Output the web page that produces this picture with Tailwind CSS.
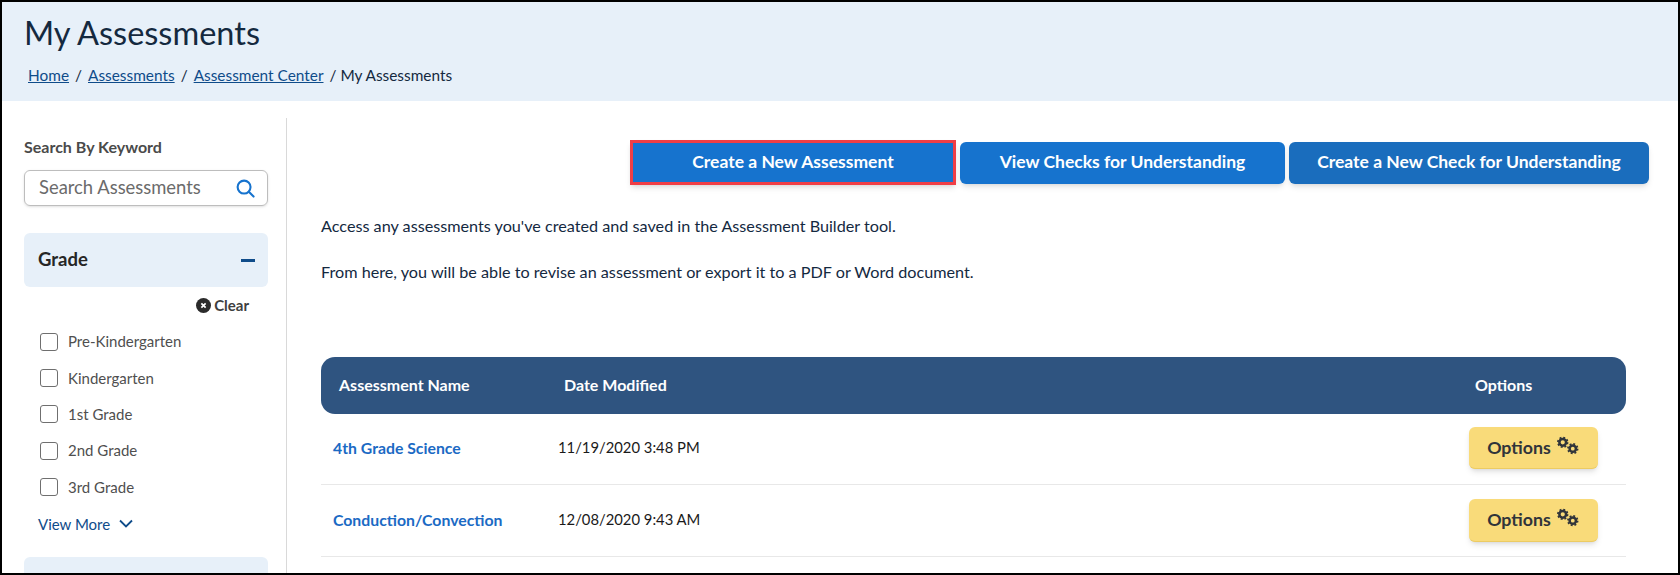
<!DOCTYPE html>
<html lang="en">
<head>
    <meta charset="UTF-8">
    <title>My Assessments</title>
    <script src="https://cdn.jsdelivr.net/npm/@tailwindcss/browser@4"></script>
</head>
<body class="bg-white font-['Lato','Liberation_Sans',sans-serif]">
<div class="h-[575px] overflow-hidden border-2 border-black">

    <!-- Page header -->
    <header class="h-[99px] bg-[#e7f0f9] pl-[22px]">
        <h1 class="pt-[13px] text-[32.5px] leading-[36px] text-[#14293f]">My Assessments</h1>
        <nav class="mt-[14px] ml-[4px] flex gap-[6px] text-[15.4px] leading-[20px] text-[#14293f]">
            <a href="#" class="text-[#0f4c8a] underline">Home</a><span>/</span>
            <a href="#" class="text-[#0f4c8a] underline">Assessments</a><span>/</span>
            <a href="#" class="text-[#0f4c8a] underline">Assessment Center</a>
            <span>/ My Assessments</span>
        </nav>
    </header>

    <div class="flex pt-[17px]">
        <!-- Filters -->
        <aside class="h-[460px] w-[285px] shrink-0 border-r border-[#d9d9d9] pt-[19px] pl-[22px] pr-[18px]">
            <p class="text-[16px] leading-[20px] font-bold text-[#4a4a4a]">Search By Keyword</p>
            <div class="mt-[13px] flex h-[36px] items-center justify-between rounded-md border border-[#bdbdbd] pl-[14px] pr-[12px] shadow-sm">
                <span class="text-[18.4px] text-[#6b6b6b]">Search Assessments</span>
                <svg class="h-[19px] w-[19px]" viewBox="0 0 20 20" fill="none" stroke="#1673ce" stroke-width="2.2" stroke-linecap="round"><circle cx="8.5" cy="8.5" r="6.8"/><path d="M13.5 13.5 L18.5 18.5"/></svg>
            </div>

            <div class="mt-[27px] flex h-[54px] items-center justify-between rounded-md bg-[#e7f0f9] pl-[14px] pr-[13px]">
                <span class="text-[18.5px] font-bold text-[#262626]">Grade</span>
                <span class="h-[3px] w-[14px] bg-[#0f4c8a]"></span>
            </div>

            <div class="mt-[8px] flex items-center justify-end gap-[3px] pr-[19px] text-[15px] leading-[20px] font-bold text-[#3f3f3f]">
                <svg class="h-[15px] w-[15px]" viewBox="0 0 16 16"><circle cx="8" cy="8" r="8" fill="#2b2b2b"/><path d="M5.7 5.7 L10.3 10.3 M10.3 5.7 L5.7 10.3" stroke="#fff" stroke-width="1.8"/></svg>
                Clear
            </div>

            <ul class="mt-[8px] pl-[16px] text-[15px] leading-[20px] text-[#4f4f4f]">
                <li class="flex h-[36.4px] items-center gap-[10px]"><span class="mt-[1px] h-[18px] w-[18px] rounded-[3px] border border-[#6f6f6f]"></span>Pre-Kindergarten</li>
                <li class="flex h-[36.4px] items-center gap-[10px]"><span class="mt-[1px] h-[18px] w-[18px] rounded-[3px] border border-[#6f6f6f]"></span>Kindergarten</li>
                <li class="flex h-[36.4px] items-center gap-[10px]"><span class="mt-[1px] h-[18px] w-[18px] rounded-[3px] border border-[#6f6f6f]"></span>1st Grade</li>
                <li class="flex h-[36.4px] items-center gap-[10px]"><span class="mt-[1px] h-[18px] w-[18px] rounded-[3px] border border-[#6f6f6f]"></span>2nd Grade</li>
                <li class="flex h-[36.4px] items-center gap-[10px]"><span class="mt-[1px] h-[18px] w-[18px] rounded-[3px] border border-[#6f6f6f]"></span>3rd Grade</li>
            </ul>

            <a href="#" class="mt-[9px] ml-[14px] flex items-center gap-[9px] text-[15px] leading-[20px] text-[#0f4c8a]">
                View More
                <svg class="h-[9px] w-[14px]" viewBox="0 0 14 9" fill="none" stroke="#0f4c8a" stroke-width="1.8"><path d="M1 1.5 L7 7.5 L13 1.5"/></svg>
            </a>

            <div class="mt-[23px] h-[54px] rounded-md bg-[#e7f0f9]"></div>
        </aside>

        <!-- Main content -->
        <main class="w-[1391px] pl-[34px] pr-[29px]">
            <div class="flex items-center justify-end gap-[4px] pt-[22px] text-[17.5px] font-bold text-white">
                <a href="#" class="flex h-[45px] w-[326px] items-center justify-center border-[3px] border-[#ef3e46] bg-[#1673ce] shadow-md">Create a New Assessment</a>
                <a href="#" class="flex h-[42px] w-[325px] items-center justify-center rounded-md bg-[#1673ce] shadow-md">View Checks for Understanding</a>
                <a href="#" class="flex h-[42px] w-[360px] items-center justify-center rounded-md bg-[#1a6dbd] shadow-md">Create a New Check for Understanding</a>
            </div>

            <p class="mt-[30px] text-[16.2px] leading-[22px] text-[#14293f]">Access any assessments you've created and saved in the Assessment Builder tool.</p>
            <p class="mt-[24px] text-[16.2px] leading-[22px] text-[#14293f]">From here, you will be able to revise an assessment or export it to a PDF or Word document.</p>

            <div class="mt-[74px] w-[1305px]">
                <div class="flex h-[57px] items-center rounded-[14px] bg-[#2f5480] pb-[2px] pl-[18px] text-[16px] font-bold text-white">
                    <span class="w-[225px]">Assessment Name</span>
                    <span class="w-[911px]">Date Modified</span>
                    <span>Options</span>
                </div>
                <div class="flex h-[71px] items-center border-b border-[#e8e8e8] pb-[2px] pl-[12px] pr-[28px]">
                    <a href="#" class="mb-[1px] w-[225px] text-[15.8px] font-bold text-[#1b6ac4]">4th Grade Science</a>
                    <span class="mb-[1px] text-[14.8px] text-[#1a1a1a]">11/19/2020 3:48 PM</span>
                    <a href="#" class="ml-auto flex h-[42px] w-[129px] items-center justify-center gap-[4px] rounded-md border-b border-[#eccb62] bg-[#f9db7a] text-[17.8px] font-bold text-[#30343a] shadow-md">
                        Options
                        <svg class="mb-[4px] h-[19px] w-[25px]" viewBox="0 0 23 18" fill="none" stroke="#30343a">
                            <circle cx="7" cy="6" r="3.2" stroke-width="2.4"/><circle cx="7" cy="6" r="4.6" stroke-width="1.6" stroke-dasharray="1.8 1.8"/>
                            <circle cx="16.5" cy="12" r="3" stroke-width="2.4"/><circle cx="16.5" cy="12" r="4.6" stroke-width="1.6" stroke-dasharray="1.8 1.8"/>
                        </svg>
                    </a>
                </div>
                <div class="flex h-[72px] items-center border-b border-[#e8e8e8] pb-[1px] pl-[12px] pr-[28px]">
                    <a href="#" class="mb-[1px] w-[225px] text-[15.8px] font-bold text-[#1b6ac4]">Conduction/Convection</a>
                    <span class="mb-[1px] text-[14.8px] text-[#1a1a1a]">12/08/2020 9:43 AM</span>
                    <a href="#" class="ml-auto flex h-[43px] w-[129px] items-center justify-center gap-[4px] rounded-md border-b border-[#eccb62] bg-[#f9db7a] text-[17.8px] font-bold text-[#30343a] shadow-md">
                        Options
                        <svg class="mb-[4px] h-[19px] w-[25px]" viewBox="0 0 23 18" fill="none" stroke="#30343a">
                            <circle cx="7" cy="6" r="3.2" stroke-width="2.4"/><circle cx="7" cy="6" r="4.6" stroke-width="1.6" stroke-dasharray="1.8 1.8"/>
                            <circle cx="16.5" cy="12" r="3" stroke-width="2.4"/><circle cx="16.5" cy="12" r="4.6" stroke-width="1.6" stroke-dasharray="1.8 1.8"/>
                        </svg>
                    </a>
                </div>
            </div>
        </main>
    </div>
</div>
</body>
</html>
